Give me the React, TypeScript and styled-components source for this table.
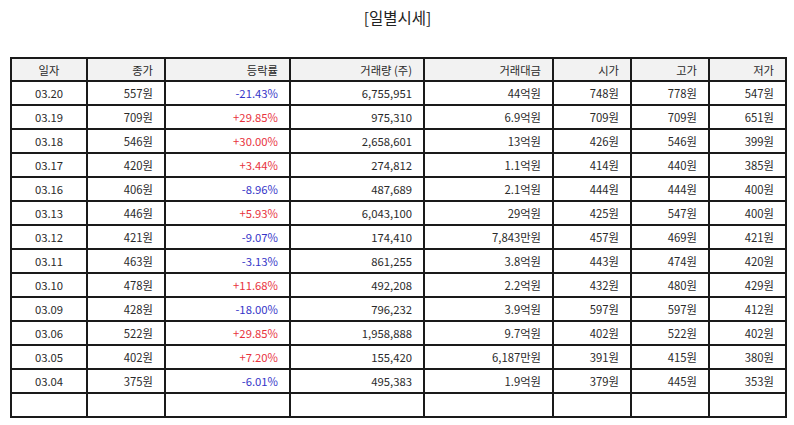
import React from 'react';
import styled, { createGlobalStyle, css } from 'styled-components';

const GlobalStyle = createGlobalStyle`
  body {
    margin: 0;
    background: #fff;
    font-family: "Noto Sans CJK KR", "Noto Sans", sans-serif;
  }
`;

const StyledPage = styled.div`
  width: 794px;
  padding: 0 9px 0 10px;
  box-sizing: border-box;
`;

const StyledTitle = styled.h2`
  margin: 0;
  height: 57px;
  padding-top: 5px;
  box-sizing: border-box;
  text-align: center;
  font-size: 15.5px;
  font-weight: 400;
  color: #222;
  line-height: 24px;
`;

const StyledTable = styled.table`
  width: 775px;
  border-collapse: collapse;
  table-layout: fixed;
  font-size: 11.3px;
  color: #2a2a2a;
`;

const StyledHeadCell = styled.th<{ $align: 'center' | 'right' }>`
  height: 21px;
  padding: 0 11px 0 0;
  border: 2px solid #1a1a1a;
  background-color: #f2f2f2;
  font-weight: 400;
  text-align: ${({ $align }) => $align};
  ${({ $align }) =>
    $align === 'center' &&
    css`
      padding: 0;
    `}
`;

const StyledCell = styled.td<{ $align: 'center' | 'right'; $tone?: 'up' | 'down' }>`
  height: 22px;
  padding: 0 11px 0 0;
  border: 2px solid #1a1a1a;
  text-align: ${({ $align }) => $align};
  white-space: nowrap;
  ${({ $align }) =>
    $align === 'center' &&
    css`
      padding: 0;
    `}
  ${({ $tone }) =>
    $tone === 'up' &&
    css`
      color: #e8323c;
    `}
  ${({ $tone }) =>
    $tone === 'down' &&
    css`
      color: #3535c8;
    `}
`;

type TColumn = { label: string; width: number; align: 'center' | 'right' };

const columns: TColumn[] = [
  { label: '일자', width: 76, align: 'center' },
  { label: '종가', width: 78, align: 'right' },
  { label: '등락률', width: 125, align: 'right' },
  { label: '거래량 (주)', width: 134, align: 'right' },
  { label: '거래대금', width: 129, align: 'right' },
  { label: '시가', width: 78, align: 'right' },
  { label: '고가', width: 78, align: 'right' },
  { label: '저가', width: 77, align: 'right' },
];

const rows: string[][] = [
  ['03.20', '557원', '-21.43%', '6,755,951', '44억원', '748원', '778원', '547원'],
  ['03.19', '709원', '+29.85%', '975,310', '6.9억원', '709원', '709원', '651원'],
  ['03.18', '546원', '+30.00%', '2,658,601', '13억원', '426원', '546원', '399원'],
  ['03.17', '420원', '+3.44%', '274,812', '1.1억원', '414원', '440원', '385원'],
  ['03.16', '406원', '-8.96%', '487,689', '2.1억원', '444원', '444원', '400원'],
  ['03.13', '446원', '+5.93%', '6,043,100', '29억원', '425원', '547원', '400원'],
  ['03.12', '421원', '-9.07%', '174,410', '7,843만원', '457원', '469원', '421원'],
  ['03.11', '463원', '-3.13%', '861,255', '3.8억원', '443원', '474원', '420원'],
  ['03.10', '478원', '+11.68%', '492,208', '2.2억원', '432원', '480원', '429원'],
  ['03.09', '428원', '-18.00%', '796,232', '3.9억원', '597원', '597원', '412원'],
  ['03.06', '522원', '+29.85%', '1,958,888', '9.7억원', '402원', '522원', '402원'],
  ['03.05', '402원', '+7.20%', '155,420', '6,187만원', '391원', '415원', '380원'],
  ['03.04', '375원', '-6.01%', '495,383', '1.9억원', '379원', '445원', '353원'],
  ['', '', '', '', '', '', '', ''],
];

const toneOf = (value: string) => {
  if (value.startsWith('+')) return 'up';
  if (value.startsWith('-')) return 'down';
  return undefined;
};

export default function App() {
  return (
    <>
      <GlobalStyle />
      <StyledPage>
        <StyledTitle>[일별시세]</StyledTitle>
        <StyledTable>
          <colgroup>
            {columns.map((col) => (
              <col key={col.label} style={{ width: col.width }} />
            ))}
          </colgroup>
          <thead>
            <tr>
              {columns.map((col) => (
                <StyledHeadCell key={col.label} $align={col.align}>
                  {col.label}
                </StyledHeadCell>
              ))}
            </tr>
          </thead>
          <tbody>
            {rows.map((row, i) => (
              <tr key={i}>
                {row.map((value, j) => (
                  <StyledCell
                    key={j}
                    $align={columns[j].align}
                    $tone={j === 2 ? toneOf(value) : undefined}
                  >
                    {value}
                  </StyledCell>
                ))}
              </tr>
            ))}
          </tbody>
        </StyledTable>
      </StyledPage>
    </>
  );
}
